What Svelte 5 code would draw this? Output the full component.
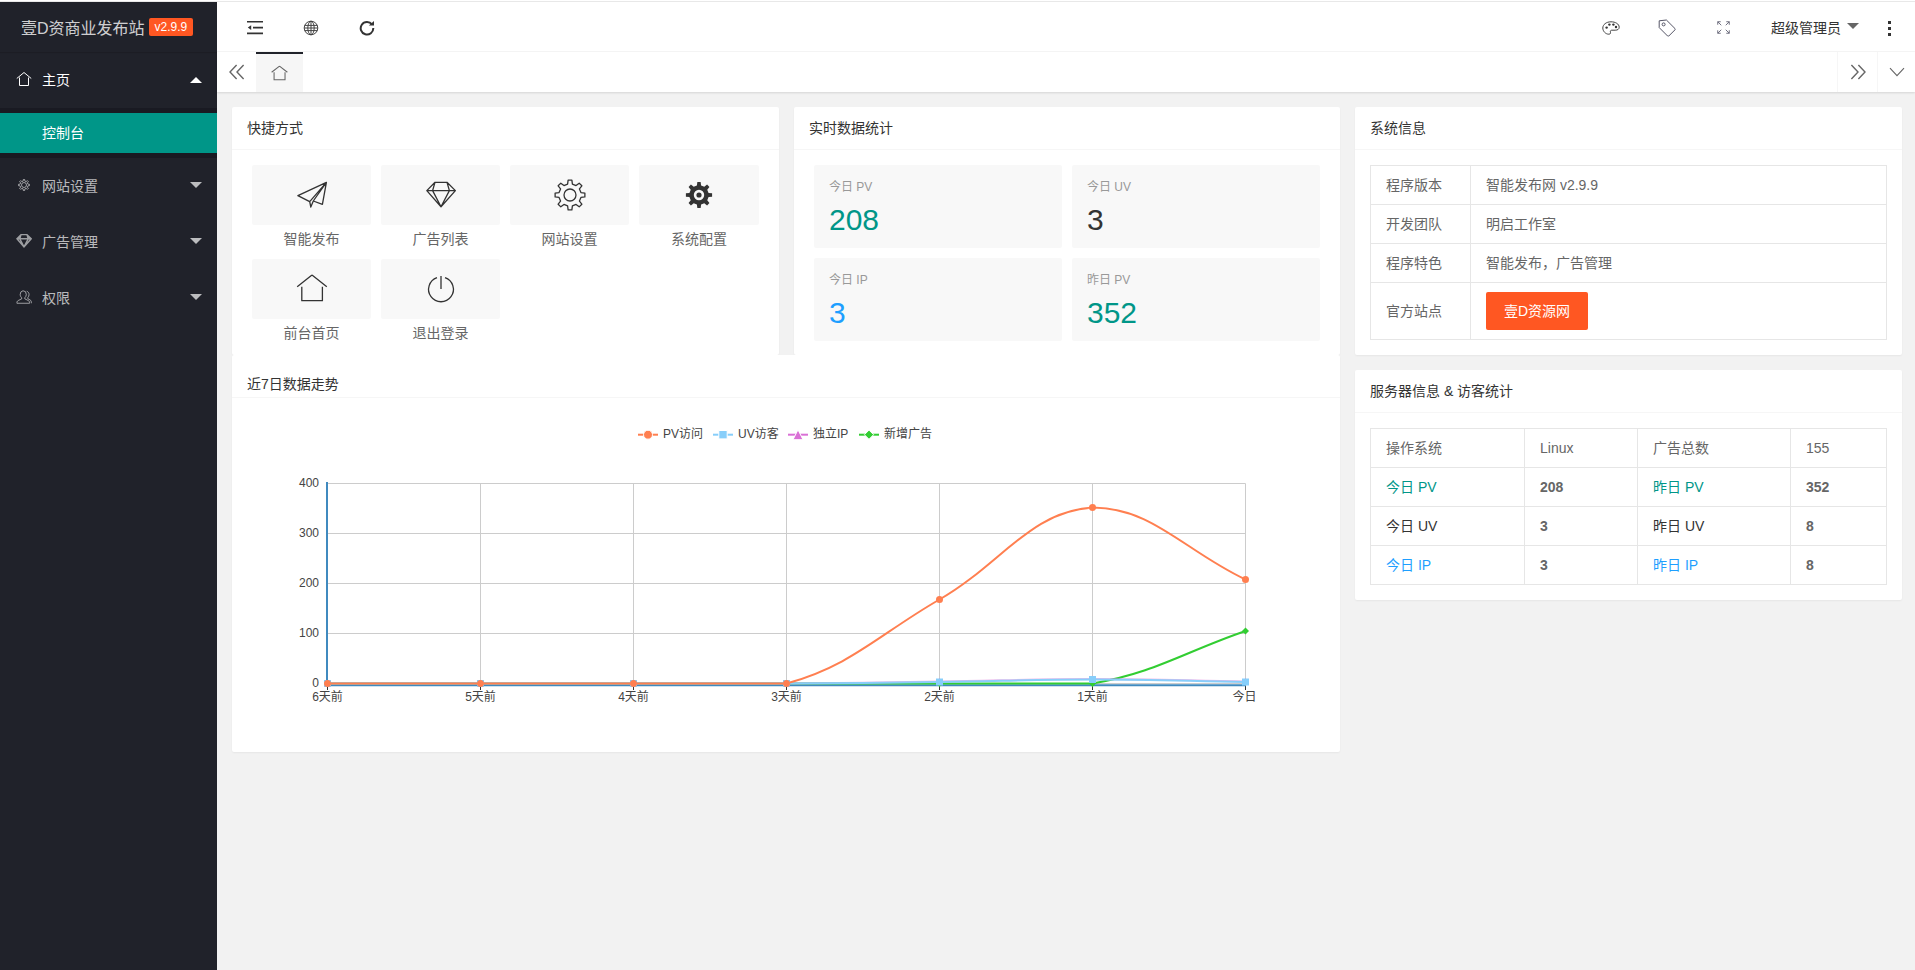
<script>
	// --- small geometry helpers for the hand drawn icons ---
	function circ(cx, cy, r) {
		return `M${cx - r} ${cy}a${r} ${r} 0 1 0 ${r * 2} 0a${r} ${r} 0 1 0 ${-r * 2} 0Z`;
	}
	function gear(cx, cy, R, r, n = 8) {
		let d = '';
		for (let i = 0; i < n; i++) {
			const a = (i * 2 * Math.PI) / n;
			const step = Math.PI / n;
			const pts = [
				[r, a - step * 0.55],
				[R, a - step * 0.32],
				[R, a + step * 0.32],
				[r, a + step * 0.55]
			];
			for (const [rad, t] of pts) {
				d += (d ? 'L' : 'M') + (cx + rad * Math.sin(t)).toFixed(2) + ' ' + (cy - rad * Math.cos(t)).toFixed(2);
			}
		}
		return d + 'Z';
	}

	const homeD = 'M16 2L1.2 13.7M16 2L30.8 13.7M5.8 13.7V27.7H26.4V13.7';
	const diamondD = 'M10 3.3H22L30.4 11.6L16 27.7L1.8 11.6ZM1.8 11.6H30.4M10 3.3L7.6 11.6L16 27.7M22 3.3L24.4 11.6L16 27.7';

	const tiles = [
		{ label: '智能发布', d: 'M30.4 3.3L1.9 16.7L13.7 22.7L14.8 28L17.3 22L26.4 25.3ZM30.4 3.3L13.7 22.7M30.4 3.3L17.3 22' },
		{ label: '广告列表', d: diamondD },
		{ label: '网站设置', d: gear(16, 16, 15, 11.2) + circ(16, 16, 6) },
		{ label: '系统配置', d: gear(16, 16, 13.2, 9.8) + circ(16, 16, 5.2) + circ(16, 16, 2.6), solid: true },
		{ label: '前台首页', d: homeD },
		{ label: '退出登录', d: 'M12 4.6A12.4 12.4 0 1 0 20 4.6M16 3V16' }
	];

	const stats = [
		{ label: '今日 PV', value: 208, cls: 'green' },
		{ label: '今日 UV', value: 3, cls: 'dark' },
		{ label: '今日 IP', value: 3, cls: 'blue' },
		{ label: '昨日 PV', value: 352, cls: 'green' }
	];

	const sysRows = [
		['程序版本', '智能发布网 v2.9.9'],
		['开发团队', '明启工作室'],
		['程序特色', '智能发布，广告管理']
	];

	const visitRows = [
		{ a: '今日 PV', av: 208, b: '昨日 PV', bv: 352, cls: 'green' },
		{ a: '今日 UV', av: 3, b: '昨日 UV', bv: 8, cls: 'dark' },
		{ a: '今日 IP', av: 3, b: '昨日 IP', bv: 8, cls: 'blue' }
	];

	// --- chart ---
	const xs = [0, 1, 2, 3, 4, 5, 6].map((i) => 327.5 + 153 * i);
	const xLabels = ['6天前', '5天前', '4天前', '3天前', '2天前', '1天前', '今日'];
	const yTicks = [400, 300, 200, 100, 0];
	const yOf = (v) => 683.5 - v / 2;

	function smooth(values) {
		const pts = values.map((v, i) => [xs[i], yOf(v)]);
		const ys = pts.map((p) => p[1]);
		const lo = Math.min(...ys);
		const hi = Math.max(...ys);
		const clamp = (y) => Math.min(hi, Math.max(lo, y));
		const ctrl = pts.map((p, i) => {
			const prev = pts[i - 1] || p;
			const next = pts[i + 1] || p;
			const vx = (next[0] - prev[0]) * 0.4;
			const vy = (next[1] - prev[1]) * 0.4;
			const d0 = Math.hypot(p[0] - prev[0], p[1] - prev[1]);
			const d1 = Math.hypot(next[0] - p[0], next[1] - p[1]);
			const s = d0 + d1 || 1;
			return {
				inn: [p[0] - (vx * d0) / s, clamp(p[1] - (vy * d0) / s)],
				out: [p[0] + (vx * d1) / s, clamp(p[1] + (vy * d1) / s)]
			};
		});
		let d = `M${pts[0][0]} ${pts[0][1]}`;
		for (let i = 1; i < pts.length; i++) {
			const a = ctrl[i - 1].out;
			const b = ctrl[i].inn;
			d += `C${a[0]} ${a[1]} ${b[0]} ${b[1]} ${pts[i][0]} ${pts[i][1]}`;
		}
		return d;
	}

	const ads = [0, 0, 0, 0, 0, 0, 105];
	const ip = [0, 0, 0, 0, 4, 9, 4];
	const uv = [0, 0, 0, 0, 3, 8, 3];
	const pv = [0, 0, 0, 0, 168, 352, 208];

	function shape(kind, x, y, size) {
		if (kind === 'tri') return `M${x} ${y - size}L${x + size} ${y + size}H${x - size}Z`;
		if (kind === 'dia') return `M${x} ${y - size}L${x + size} ${y}L${x} ${y + size}L${x - size} ${y}Z`;
		if (kind === 'sq') return `M${x - size} ${y - size}H${x + size}V${y + size}H${x - size}Z`;
		return circ(x, y, size);
	}

	// drawn in this order, later series lie on top
	const series = [
		{ color: '#32cd32', values: ads, kind: 'dia', size: 3.5 },
		{ color: '#da70d6', values: ip, kind: 'tri', size: 3.5, faint: true },
		{ color: '#87cefa', values: uv, kind: 'sq', size: 3.5 },
		{ color: '#ff7f50', values: pv, kind: 'cir', size: 3.5 }
	];

	const legend = [
		{ color: '#ff7f50', kind: 'cir', x: 638, size: 4.5, label: 'PV访问' },
		{ color: '#87cefa', kind: 'sq', x: 713, size: 4.2, label: 'UV访客' },
		{ color: '#da70d6', kind: 'tri', x: 788, size: 5, label: '独立IP' },
		{ color: '#32cd32', kind: 'dia', x: 859, size: 4.6, label: '新增广告' }
	];
</script>

<div class="strip"></div>
<div class="layout">
	<aside class="side">
		<div class="logo">
			<span>壹D资商业发布站</span>
			<em class="badge">v2.9.9</em>
		</div>
		<nav>
			<div class="nav-item active">
				<svg class="nav-ico" viewBox="0 0 32 32"><path d="M16 3L1.5 15M16 3L30.5 15M7 13V29H25V13" /></svg>
				<span>主页</span>
				<i class="caret up"></i>
			</div>
			<div class="child">
				<div class="child-item">控制台</div>
			</div>
			<div class="nav-item">
				<svg class="nav-ico" viewBox="0 0 32 32"><path d={gear(16, 16, 11, 8) + circ(16, 16, 5)} /></svg>
				<span>网站设置</span>
				<i class="caret"></i>
			</div>
			<div class="nav-item">
				<svg class="nav-ico heavy" viewBox="0 0 32 32"><path d={diamondD} /></svg>
				<span>广告管理</span>
				<i class="caret"></i>
			</div>
			<div class="nav-item">
				<svg class="nav-ico" viewBox="0 0 32 32"><path d="M14 3.5a6.6 7.4 0 0 1 6.6 7.4c0 3-1.4 5.2-3 6.6v2.2l7 3.4c2 1 2.6 2.6 2.6 5.4H1.8c0-2.8.6-4.4 2.6-5.4l7-3.4v-2.2c-1.6-1.4-3-3.6-3-6.6A6.6 7.4 0 0 1 14 3.5ZM21.5 4.5c3 1 4.6 3.5 4.6 6.6 0 2.6-1 4.6-2.4 6v2.4l4.6 2.4c1.8 1 2.4 3 2.4 6.6" /></svg>
				<span>权限</span>
				<i class="caret"></i>
			</div>
		</nav>
	</aside>

	<div class="main">
		<header class="top">
			<div class="top-group left">
				<div class="top-item">
					<svg viewBox="0 0 16 14" width="16" height="14"><path class="solid" d="M0 0h16v1.6H0zM0 11.6h16v1.6H0zM6 5.8h10v1.6H6zM4.2 4.2v4.8L.8 6.6z" /></svg>
				</div>
				<div class="top-item">
					<svg class="line" viewBox="0 0 16 16" width="16" height="16"><circle cx="8" cy="8" r="6.8" /><ellipse cx="8" cy="8" rx="3.2" ry="6.8" /><path d="M8 1.2v13.6M1.6 5.4h12.8M1.6 10.6h12.8M1.2 8h13.6" /></svg>
				</div>
				<div class="top-item">
					<svg viewBox="0 0 16 16" width="16" height="16"><path class="bold" d="M13 4.4A6.3 6.3 0 1 0 14.3 8" /><path class="solid" d="M9.8 5.6L15 .9v4.7z" /></svg>
				</div>
			</div>
			<div class="top-group">
				<div class="top-item">
					<svg class="line" viewBox="0 0 18 14" width="18" height="14"><path d="M9 .8C4.2.8.8 3.6.8 7c0 3.2 2.8 6.2 6 6.2 2 0 1.8-1.4 1.6-2.2-.2-1 .2-1.8 1.4-1.8h3.4c2.4 0 4-1 4-3C17.2 3 13.4.8 9 .8Z" /><circle class="dot" cx="4.6" cy="6.6" r="1.2" /><circle class="dot" cx="7.4" cy="3.6" r="1.2" /><circle class="dot" cx="11.4" cy="3.6" r="1.2" /><circle class="dot" cx="14" cy="6" r="1.2" /></svg>
				</div>
				<div class="top-item">
					<svg class="line blue-line" viewBox="0 0 18 18" width="18" height="18"><path d="M1.2 1.8L8.4 1L17 9.6Q17.4 10.2 17 10.8L10.8 17Q10.2 17.4 9.6 17L1.2 8.6Z" /><circle cx="5.6" cy="5.4" r="1.5" /></svg>
				</div>
				<div class="top-item">
					<svg class="line gray-line" viewBox="0 0 14 14" width="13" height="13"><path d="M.8 4V.8H4M.8.8L4.6 4.6M13.2 4V.8H10M13.2.8L9.4 4.6M.8 10V13.2H4M.8 13.2L4.6 9.4M13.2 10V13.2H10M13.2 13.2L9.4 9.4" /></svg>
				</div>
				<div class="user">
					<span>超级管理员</span>
					<i class="caret gray"></i>
				</div>
				<div class="more">
					<b></b><b></b><b></b>
				</div>
			</div>
		</header>

		<div class="tabs">
			<div class="tab-btn first">
				<svg class="tab-line" viewBox="0 0 16 16" width="16" height="16"><path d="M7.6 1L1 8L7.6 15M14.6 1L8 8L14.6 15" /></svg>
			</div>
			<div class="tab">
				<svg class="tab-line home" viewBox="0 0 32 32" width="17" height="17"><path d={homeD} /></svg>
			</div>
			<div class="tab-space"></div>
			<div class="tab-btn">
				<svg class="tab-line" viewBox="0 0 16 16" width="16" height="16"><path d="M1.4 1L8 8L1.4 15M8.4 1L15 8L8.4 15" /></svg>
			</div>
			<div class="tab-btn last">
				<svg class="tab-line thin" viewBox="0 0 16 10" width="16" height="10"><path d="M1 1.2L8 8.6L15 1.2" /></svg>
			</div>
		</div>

		<main class="content">
			<div class="left-col">
				<section class="card">
					<div class="card-head">快捷方式</div>
					<div class="tiles">
						{#each tiles as t}
							<div class="shortcut">
								<div class="tile">
									<svg class="tile-ico" class:solid-ico={t.solid} viewBox="0 0 32 32" width="32" height="32"><path d={t.d} /></svg>
								</div>
								<span>{t.label}</span>
							</div>
						{/each}
					</div>
				</section>

				<section class="card">
					<div class="card-head">实时数据统计</div>
					<div class="stats">
						{#each stats as s}
							<div class="stat">
								<p>{s.label}</p>
								<strong class={s.cls}>{s.value}</strong>
							</div>
						{/each}
					</div>
				</section>

				<section class="card chart-card">
					<div class="card-head low">近7日数据走势</div>
					<svg class="chart" viewBox="232 398 1108 354" width="1108" height="354">
						{#each legend as l}
							<path d="M{l.x} 434.7h20" stroke={l.color} stroke-width="2" />
							<path d={shape(l.kind, l.x + 10, 434.7, l.size)} fill={l.color} stroke="#fff" stroke-width="1" />
							<text class="legend-text" x={l.x + 25} y="437.5">{l.label}</text>
						{/each}

						{#each yTicks as t}
							<path class="grid" d="M327.5 {yOf(t)}H1245.5" />
							<text class="axis-text" x="319" y={yOf(t) + 3} text-anchor="end">{t}</text>
						{/each}
						{#each xs as x, i}
							<path class="grid" d="M{x} 483.5V683.5" />
							<path class="tick" d="M{x} 686V690" />
							<text class="axis-text" x={i === 6 ? x - 1 : x} y="701" text-anchor="middle">{xLabels[i]}</text>
						{/each}

						<path class="axis" d="M327 482V685.2H1246" />

						{#each series as s}
							<path class="series" class:faint={s.faint} d={smooth(s.values)} stroke={s.color} />
						{/each}
						{#each series as s}
							{#each s.values as v, i}
								<path d={shape(s.kind, xs[i], yOf(v), s.size)} fill={s.color} />
							{/each}
						{/each}
					</svg>
				</section>
			</div>

			<div class="right-col">
				<section class="card">
					<div class="card-head">系统信息</div>
					<div class="card-body">
						<table class="sys">
							<tbody>
								{#each sysRows as r}
									<tr><td class="key">{r[0]}</td><td>{r[1]}</td></tr>
								{/each}
								<tr>
									<td class="key">官方站点</td>
									<td class="btn-cell"><span class="btn">壹D资源网</span></td>
								</tr>
							</tbody>
						</table>
					</div>
				</section>

				<section class="card">
					<div class="card-head">服务器信息 &amp; 访客统计</div>
					<div class="card-body">
						<table class="visit">
							<tbody>
								<tr><td class="c1">操作系统</td><td class="c2">Linux</td><td class="c3">广告总数</td><td>155</td></tr>
								{#each visitRows as r}
									<tr>
										<td class={r.cls}>{r.a}</td>
										<td><b>{r.av}</b></td>
										<td class={r.cls}>{r.b}</td>
										<td><b>{r.bv}</b></td>
									</tr>
								{/each}
							</tbody>
						</table>
					</div>
				</section>
			</div>
		</main>
	</div>
</div>

<style>
	:global(body) {
		background: #f2f2f2;
		font-family: "Liberation Sans", "Noto Sans CJK SC", sans-serif;
		font-size: 14px;
		color: #666;
		overflow: hidden;
	}
	.strip { height: 0; border-top: 1px solid #fff; border-bottom: 1px solid #e8e8e8; }
	.layout { display: flex; height: 968px; }

	/* sidebar */
	.side { width: 217px; flex: none; background: #20222a; color: rgba(255,255,255,.7); }
	.logo { height: 50px; display: flex; align-items: center; padding-left: 21px; font-size: 16px; color: rgba(255,255,255,.8); box-shadow: 0 1px 1px rgba(0,0,0,.12); }
	.badge { margin-left: 4px; height: 18px; line-height: 18px; padding: 0 6px; border-radius: 2px; background: #ff5722; color: #fff; font-size: 12px; font-style: normal; }
	.nav-item { height: 54px; display: flex; align-items: center; padding: 0 15px 2px 16px; position: relative; }
	.nav-item.active { color: #fff; }
	.nav-ico { width: 16px; height: 16px; margin-right: 10px; fill: none; stroke: currentColor; stroke-width: 2; opacity: .8; }
	.nav-ico.heavy { stroke-width: 2.8; }
	.active .nav-ico { opacity: 1; }
	.caret { position: absolute; right: 15px; top: 50%; margin-top: -4px; border: 6px solid transparent; border-top-color: rgba(255,255,255,.7); border-bottom: 0; }
	.caret.up { border-top: 0; border-bottom: 6px solid #fff; margin-top: -3px; }
	.child { background: #191a22; padding: 5px 0; }
	.child-item { height: 40px; line-height: 40px; padding-left: 42px; background: #009688; color: #fff; }

	/* header */
	.main { flex: 1; min-width: 0; display: flex; flex-direction: column; }
	.top { height: 49px; background: #fff; border-bottom: 1px solid #f6f6f6; display: flex; justify-content: space-between; flex: none; }
	.top-group { display: flex; align-items: center; }
	.top-group.left { padding-left: 10px; }
	.top-item { width: 56px; display: flex; justify-content: center; align-items: center; height: 100%; padding-top: 2px; box-sizing: border-box; }
	.solid { fill: #333; }
	.bold { fill: none; stroke: #333; stroke-width: 2; }
	.line { fill: none; stroke: #444; stroke-width: 1; }
	.line .dot { fill: #333; stroke: none; }
	.blue-line { stroke: #556; }
	.gray-line { stroke: #667; }
	.user { width: 96px; height: 47px; padding: 2px 0 0 20px; position: relative; color: #333; line-height: 49px; }
	.caret.gray { right: 8px; border-top-color: #666; }
	.more { width: 44px; margin-right: 4px; display: flex; flex-direction: column; align-items: center; gap: 3px; padding-top: 3px; }
	.more b { width: 3px; height: 3px; background: #333; display: block; }

	/* tab bar */
	.tabs { height: 40px; background: #fff; display: flex; flex: none; box-shadow: 0 1px 2px rgba(0,0,0,.12); position: relative; }
	.tab-btn { width: 39px; border-left: 1px solid #f6f6f6; display: flex; align-items: center; justify-content: center; }
	.tab-btn.first { border-left: 0; }
	.tab-btn.last { width: 37px; }
	.tab { width: 47px; background: #f6f6f6; border-top: 2px solid #20222a; box-sizing: border-box; display: flex; align-items: center; justify-content: center; }
	.tab-space { flex: 1; }
	.tab-line { fill: none; stroke: #666; stroke-width: 1.4; }
	.tab-line.thin { stroke-width: 1.1; }
	.tab-line.home { stroke-width: 2; }

	/* cards */
	.content { padding: 15px 13px 0 15px; display: grid; grid-template-columns: 1108px 547px; column-gap: 15px; align-items: start; }
	.left-col { display: grid; grid-template-columns: 547px 546px; column-gap: 15px; }
	.right-col { display: flex; flex-direction: column; gap: 15px; }
	.card { background: #fff; border-radius: 2px; box-shadow: 0 1px 2px rgba(0,0,0,.05); }
	.card-head { height: 42px; line-height: 42px; padding: 0 15px; border-bottom: 1px solid #f6f6f6; color: #333; }
	.card-head.low { line-height: 20px; padding-top: 19px; height: 23px; }
	.card-body { padding: 15px; }

	.tiles { display: grid; grid-template-columns: 119px 119px 119px 120px; gap: 10px; padding: 15px 20px 12px; }
	.shortcut { text-align: center; line-height: 20px; }
	.shortcut span { display: block; margin-top: 4px; }
	.tile { height: 60px; background: #f8f8f8; border-radius: 2px; display: flex; align-items: center; justify-content: center; }
	.tile-ico { fill: none; stroke: #333; stroke-width: 1.3; stroke-linejoin: round; }
	.tile-ico.solid-ico { fill: #333; stroke: none; fill-rule: evenodd; }

	.stats { display: grid; grid-template-columns: 1fr 1fr; gap: 10px; padding: 15px 20px 14px; }
	.stat { height: 83px; box-sizing: border-box; background: #f8f8f8; border-radius: 2px; padding: 13px 15px 10px; }
	.stat p { margin: 0; font-size: 12px; line-height: 18px; color: #999; }
	.stat strong { display: block; margin-top: 6px; font-weight: 400; font-size: 30px; line-height: 36px; }
	.green { color: #009688; }
	.dark { color: #333; }
	.blue { color: #1e9fff; }

	.chart-card { grid-column: 1 / 3; }
	.chart { display: block; }
	.legend-text { font-size: 12px; fill: #444; }
	.axis-text { font-size: 12px; fill: #444; }
	.grid { stroke: #ccc; stroke-width: 1; fill: none; }
	.tick { stroke: #333; stroke-width: 1; }
	.axis { fill: none; stroke: #408abf; stroke-width: 2; }
	.series { fill: none; stroke-width: 2; }
	.series.faint { opacity: .5; }

	table { width: 100%; border-collapse: collapse; table-layout: fixed; }
	td { border: 1px solid #e6e6e6; padding: 9px 15px; line-height: 20px; }
	.key { width: 69px; }
	.btn { display: inline-block; height: 38px; line-height: 38px; padding: 0 18px; background: #ff5722; color: #fff; border-radius: 2px; vertical-align: top; }
	.c1 { width: 123px; }
	.c2 { width: 82px; }
	.c3 { width: 122px; }
	td.green { color: #009688; }
	td.dark { color: #333; }
	td.blue { color: #1e9fff; }
	td b { font-weight: 700; }
</style>
